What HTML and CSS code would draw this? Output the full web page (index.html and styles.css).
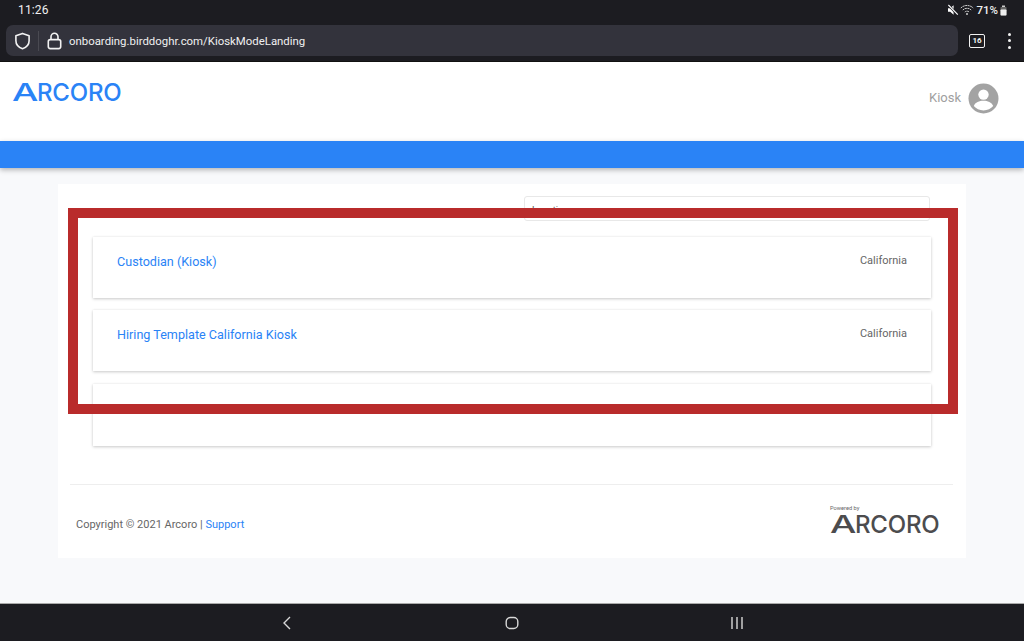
FILE: index.html
```html
<!DOCTYPE html>
<html lang="en">
<head>
<meta charset="utf-8">
<title>Kiosk Mode Landing</title>
<link rel="stylesheet" href="styles.css">
</head>
<body>
<div class="app">
  <div class="chrome">
    <div class="status">
      <span class="time">11:26</span>
      <div class="status-right">
        <svg class="mute" width="12" height="12" viewBox="0 0 12 12"><path d="M1 4.200h2.200L6.600 1.200v9.600L3.200 7.800H1z" fill="#fff"/><path d="M1.400 1.200l9.600 9.800" stroke="#1c1c21" stroke-width="2.400"/><path d="M1.400 1l9.400 9.600" stroke="#fff" stroke-width="1.100"/></svg>
        <svg class="wifi" width="14" height="12" viewBox="0 0 14 12" fill="none" stroke="#ccc" stroke-width="1" stroke-dasharray="2 .5"><path d="M.8 4C4.200.6 9.800.6 13.200 4"/><path d="M2.800 6c2.400-2.300 6-2.300 8.400 0"/><path d="M4.800 8c1.300-1.100 3.100-1.100 4.400 0"/><circle cx="7" cy="10" r="1" fill="#ccc" stroke="none"/></svg>
        <span class="battery-text">71%</span>
        <svg class="battery" width="7" height="11" viewBox="0 0 7 11"><path d="M2 .5h3V2H2z" fill="#ccc"/><rect x=".5" y="2" width="6" height="8.500" rx=".8" fill="#666"/><rect x=".5" y="4.400" width="6" height="6.100" rx=".8" fill="#eee"/></svg>
      </div>
    </div>
    <div class="toolbar">
      <div class="urlbar">
        <svg class="shield" width="17" height="18" viewBox="0 0 17 18" fill="none" stroke="#f2f2f2" stroke-width="1.600"><path d="M8.500 1.400l6.600 2.300v5c0 3.800-2.600 6.600-6.600 8-4-1.400-6.600-4.200-6.600-8v-5z" stroke-linejoin="round"/></svg>
        <span class="divider"></span>
        <svg class="lock" width="15" height="18" viewBox="0 0 15 18" fill="none" stroke="#f2f2f2" stroke-width="1.600"><rect x="1.300" y="7.600" width="12.400" height="9" rx="2"/><path d="M4 7.600V4.800a3.500 3.500 0 0 1 7 0v2.800"/></svg>
        <span class="url">onboarding.birddoghr.com/KioskModeLanding</span>
      </div>
      <span class="tabs">16</span>
      <div class="kebab"><i></i><i></i><i></i></div>
    </div>
  </div>

  <header class="site-header">
    <div class="logo logo-blue"><span class="logo-a">A</span><span class="logo-rest">RCORO</span></div>
    <div class="user">
      <span class="user-name">Kiosk</span>
      <svg width="31" height="31" viewBox="0 0 31 31"><circle cx="15.500" cy="15.500" r="15" fill="#a3a3a3"/><circle cx="15.500" cy="11.600" r="5.200" fill="#fff"/><path d="M5.800 23c1.400-3.800 5.600-5.200 9.700-5.200s8.300 1.400 9.700 5.200c-2.300 2.800-5.700 4.400-9.700 4.400s-7.400-1.600-9.700-4.400z" fill="#fff"/></svg>
    </div>
  </header>
  <div class="blue-bar"></div>

  <main class="content">
    <section class="panel">
      <div class="filter-row">
        <div class="select"><span>Location</span></div>
      </div>
      <div class="cards">
        <article class="card"><a class="card-title">Custodian (Kiosk)</a><span class="card-loc">California</span></article>
        <article class="card"><a class="card-title">Hiring Template California Kiosk</a><span class="card-loc">California</span></article>
        <article class="card card-last"></article>
      </div>
      <footer class="footer">
        <p class="copyright">Copyright © 2021 Arcoro | <a class="support">Support</a></p>
        <div class="powered">
          <span class="powered-by">Powered by</span>
          <div class="logo logo-dark"><span class="logo-a">A</span><span class="logo-rest">RCORO</span></div>
        </div>
      </footer>
    </section>
    <div class="highlight"></div>
  </main>

  <nav class="android-nav">
    <svg width="10" height="14" viewBox="0 0 10 14" fill="none" stroke="#d8d8d8" stroke-width="1.400"><path d="M8 1L2 7l6 6"/></svg>
    <svg width="14" height="14" viewBox="0 0 14 14" fill="none" stroke="#d8d8d8" stroke-width="1.400"><rect x="1.200" y="1.500" width="11.600" height="11" rx="4"/></svg>
    <svg width="14" height="14" viewBox="0 0 14 14" fill="none" stroke="#d8d8d8" stroke-width="1.400"><path d="M2 1v12M7 1v12M12 1v12"/></svg>
  </nav>
</div>
</body>
</html>
```
FILE: styles.css
```css
* { box-sizing: border-box; }
html, body { margin: 0; padding: 0; }
body {
  width: 1024px;
  height: 641px;
  overflow: hidden;
  font-family: Roboto, "Liberation Sans", sans-serif;
  background: #f8f9fb;
}
.app { display: flex; flex-direction: column; height: 641px; }

.chrome { height: 62px; flex: none; background: #1c1c21; border-bottom: 1px solid #111; }
.status {
  height: 25px;
  display: flex;
  align-items: flex-start;
  justify-content: space-between;
  padding: 3px 17px 0 18px;
  color: #f0f0f0;
}
.time { font-size: 12px; line-height: 14px; letter-spacing: .15px; }
.status-right { display: flex; align-items: center; height: 14px; gap: 2px; }
.mute { margin-right: -1px; }
.battery-text { font-size: 11.500px; line-height: 14px; font-weight: 500; }

.toolbar { display: flex; align-items: center; height: 31px; padding-left: 6px; }
.urlbar {
  width: 952px;
  height: 31px;
  background: #33333c;
  border-radius: 7px;
  display: flex;
  align-items: center;
  padding-left: 8px;
}
.divider { width: 1px; height: 20px; background: #4a4a52; margin: 0 8px 0 7px; }
.url { font-size: 11.400px; color: #f0f0f0; margin-left: 7px; }
.tabs {
  margin-left: 11px;
  width: 16px;
  height: 14px;
  border: 1.500px solid #f2f2f2;
  border-radius: 2px;
  color: #f2f2f2;
  font-size: 8px;
  font-weight: 700;
  line-height: 11px;
  text-align: center;
}
.kebab { margin-left: 23px; display: flex; flex-direction: column; gap: 3.500px; }
.kebab i { width: 3px; height: 3px; border-radius: 50%; background: #f2f2f2; display: block; }

.site-header {
  height: 79px;
  flex: none;
  background: #fff;
  display: flex;
  justify-content: space-between;
  align-items: flex-start;
  padding: 19px 25px 0 12px;
}
.logo {
  display: flex;
  width: 110px;
  font: 500 24px/24px Inter, "Liberation Sans", sans-serif;
}
.logo-blue { color: #2a83f6; }
.logo-dark { color: #4c4c4e; margin-top: 2px; }
.logo-a { display: block; width: 25px; flex: none; transform: scaleX(1.55); transform-origin: left center; }
.logo-rest { display: block; letter-spacing: -.2px; white-space: nowrap; }
.user { display: flex; align-items: center; gap: 7px; margin-top: 1.500px; }
.user-name { font-size: 13px; line-height: 15px; color: #a0a0a0; margin-top: -1px; }

.blue-bar {
  height: 27px;
  flex: none;
  background: #2a83f6;
  box-shadow: 0 2px 5px rgba(0, 0, 0, .28);
  position: relative;
}

.content { flex: 1; position: relative; padding: 16px 58px 0; }
.panel { background: #fff; height: 374px; padding: 12px 35px 0 35px; }
.filter-row { display: flex; justify-content: flex-end; height: 25px; padding-right: 1px; }
.select {
  width: 406px;
  height: 25px;
  border: 1px solid #e8e8e8;
  border-radius: 3px;
  padding: 7px 7px 0;
  font-size: 9.500px;
  color: #555;
}
.cards { display: flex; flex-direction: column; gap: 12px; margin-top: 16px; }
.card {
  height: 61px;
  background: #fff;
  display: flex;
  justify-content: space-between;
  align-items: flex-start;
  padding: 17px 24px 0 24px;
  box-shadow: 0 1px 3px rgba(0, 0, 0, .2), 0 0 2px rgba(0, 0, 0, .06);
}
.card-last { height: 62px; margin-top: 1px; }
.card-title { font-size: 12.600px; line-height: 16px; color: #2a83f6; }
.card-loc { font-size: 11px; line-height: 13px; color: #666; }

.footer {
  margin: 38px -22px 0 -23px;
  border-top: 1px solid #eeeeee;
  display: flex;
  justify-content: space-between;
  align-items: flex-start;
  padding: 0 15px 0 6px;
  height: 74px;
}
.copyright { margin: 33px 0 0; font-size: 11px; line-height: 13px; color: #666; }
.support { color: #2a83f6; }
.powered { display: flex; flex-direction: column; width: 108px; margin-top: 20px; }
.powered-by { font-size: 5.700px; line-height: 6px; color: #666; }

.highlight {
  position: absolute;
  left: 68px;
  top: 40px;
  width: 890px;
  height: 206px;
  border: 10px solid #b92b2b;
}

.android-nav {
  height: 38px;
  flex: none;
  background: #1c1c21;
  border-top: 1px solid #aaa;
  display: grid;
  grid-template-columns: repeat(3, 225px);
  justify-content: center;
  justify-items: center;
  align-items: center;
}
```
